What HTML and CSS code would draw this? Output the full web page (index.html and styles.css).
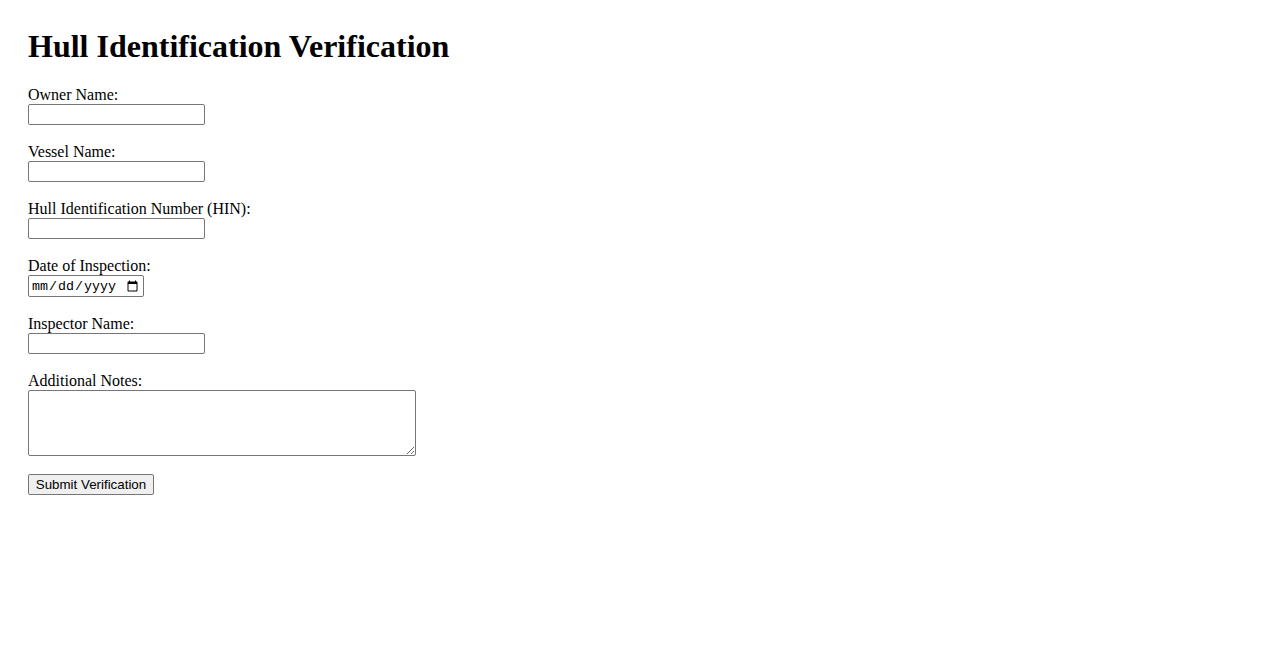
FILE: index.html
```html
<!DOCTYPE html>
<html lang="en">
<head>
<meta charset="utf-8">
<title>Hull Identification Verification</title>
<link rel="stylesheet" href="styles.css">
</head>
<body>
<div class="page">
  <h1 class="title">Hull Identification Verification</h1>
  <form class="form">
    <div class="group">
      <label class="label" for="owner">Owner Name:</label>
      <input class="field" type="text" id="owner">
    </div>
    <div class="group">
      <label class="label" for="vessel">Vessel Name:</label>
      <input class="field" type="text" id="vessel">
    </div>
    <div class="group">
      <label class="label" for="hin">Hull Identification Number (HIN):</label>
      <input class="field" type="text" id="hin">
    </div>
    <div class="group">
      <label class="label" for="date">Date of Inspection:</label>
      <input class="field date" type="date" id="date">
    </div>
    <div class="group">
      <label class="label" for="inspector">Inspector Name:</label>
      <input class="field" type="text" id="inspector">
    </div>
    <div class="group">
      <label class="label" for="notes">Additional Notes:</label>
      <textarea class="notes" id="notes"></textarea>
    </div>
    <button class="submit" type="button">Submit Verification</button>
  </form>
</div>
</body>
</html>
```

FILE: styles.css
```css
html, body {
  margin: 0;
  background: #ffffff;
}
body {
  font-family: "Liberation Serif", "Times New Roman", serif;
  font-size: 16px;
  color: #000000;
}
.page {
  padding: 28px;
}
.title {
  margin: 0 0 21.44px 0;
  font-size: 32px;
  font-weight: bold;
  line-height: 37px;
}
.form {
  display: flex;
  flex-direction: column;
  align-items: flex-start;
}
.group {
  display: flex;
  flex-direction: column;
  align-items: flex-start;
  margin-bottom: 18px;
}
.label {
  display: block;
  line-height: 18px;
}
.field {
  box-sizing: border-box;
  width: 177px;
  height: 21px;
  margin: 0;
  padding: 1px 2px;
  border: 1px solid #767676;
  border-radius: 2px;
  font-family: "Liberation Sans", Arial, sans-serif;
  font-size: 13.33px;
  background: #ffffff;
}
.date {
  width: 116px;
  height: 22px;
  font-family: "Liberation Mono", "Courier New", monospace;
  font-size: 13.33px;
  color: #000000;
}
.notes {
  box-sizing: border-box;
  width: 388px;
  height: 66px;
  margin: 0;
  padding: 2px;
  border: 1px solid #767676;
  border-radius: 2px;
  font-family: "Liberation Mono", monospace;
  font-size: 13.33px;
}
.submit {
  box-sizing: border-box;
  width: 126px;
  height: 21px;
  margin: 0;
  padding: 1px 6px;
  border: 1px solid #767676;
  border-radius: 2px;
  background: #efefef;
  font-family: "Liberation Sans", Arial, sans-serif;
  font-size: 13.33px;
  color: #000000;
}
```
